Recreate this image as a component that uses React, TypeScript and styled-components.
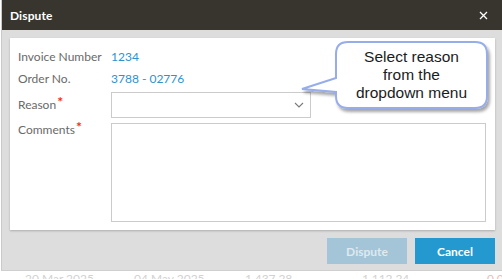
import React from "react";
import styled, { createGlobalStyle } from "styled-components";

const GlobalStyle = createGlobalStyle`
  html, body {
    margin: 0;
    padding: 0;
    background: #ffffff;
    overflow: hidden;
  }
  body {
    font-family: Lato, "Open Sans", sans-serif;
  }
`;

const Page = styled.div`
  width: 502px;
  height: 279px;
  overflow: hidden;
  position: relative;
  background: #ffffff;
`;

const Dialog = styled.div`
  width: 501px;
  height: 271px;
  box-sizing: border-box;
  margin-left: 1px;
  border-left: 1px solid #c9c9c9;
  border-bottom: 1px solid #cfcfcf;
  background: #dddddd;
  display: flex;
  flex-direction: column;
`;

const Header = styled.div`
  height: 30px;
  flex: none;
  background: #38352f;
  display: flex;
  align-items: center;
  justify-content: space-between;
  padding: 0 14px 0 8px;
`;

const Title = styled.div`
  color: #ffffff;
  font-size: 12px;
  font-weight: 700;
  letter-spacing: 0.1px;
`;

const CloseButton = styled.button`
  border: none;
  background: none;
  padding: 0;
  width: 9px;
  height: 9px;
  display: flex;
  cursor: pointer;
`;

const Body = styled.div`
  flex: 1;
  display: flex;
  flex-direction: column;
  padding: 8px 7px 0 8px;
`;

const Panel = styled.div`
  position: relative;
  height: 192px;
  box-sizing: border-box;
  background: #ffffff;
  box-shadow: 0 1px 2px rgba(0, 0, 0, 0.22);
  padding: 10px 8px 0 8px;
  display: flex;
  flex-direction: column;
  gap: 4px;
`;

const Row = styled.div<{ $top?: boolean }>`
  display: flex;
  align-items: ${(p) => (p.$top ? "flex-start" : "center")};
  min-height: 18px;
`;

const Label = styled.div<{ $offset?: number }>`
  width: 93px;
  flex: none;
  color: #6a6a6a;
  font-size: 12px;
  line-height: 16px;
  padding-top: ${(p) => p.$offset ?? 0}px;
`;

const Required = styled.span`
  color: #e8321e;
  font-size: 14px;
  font-weight: 700;
  line-height: 0;
  vertical-align: 2px;
  margin-left: 1px;
`;

const Value = styled.div`
  color: #2f92cf;
  font-size: 12px;
  line-height: 16px;
`;

const SelectBox = styled.div`
  width: 200px;
  height: 26px;
  box-sizing: border-box;
  border: 1px solid #cbcbcb;
  background: #ffffff;
  display: flex;
  align-items: center;
  justify-content: flex-end;
  padding-right: 6px;
`;

const TextArea = styled.textarea`
  width: 375px;
  height: 99px;
  box-sizing: border-box;
  border: 1px solid #cbcbcb;
  resize: none;
  outline: none;
  margin: 1px 0 0 0;
  font-family: Lato, sans-serif;
`;

const Callout = styled.div`
  position: absolute;
  left: 288px;
  top: 0px;
  width: 200px;
  height: 80px;
`;

const CalloutText = styled.div`
  position: absolute;
  left: 38px;
  top: 10px;
  width: 151px;
  text-align: center;
  font-family: "Liberation Sans", Arial, sans-serif;
  font-size: 15.5px;
  line-height: 18px;
  color: #1c1c1c;
`;

const Footer = styled.div`
  display: flex;
  justify-content: flex-end;
  gap: 8px;
  padding-top: 8px;
`;

const Button = styled.button<{ $primary?: boolean }>`
  width: 80px;
  height: 26px;
  border: none;
  font-family: Lato, sans-serif;
  font-size: 12px;
  font-weight: 700;
  cursor: ${(p) => (p.$primary ? "pointer" : "default")};
  background: ${(p) => (p.$primary ? "#2399d0" : "#a3c5d7")};
  color: ${(p) => (p.$primary ? "#ffffff" : "#dfe9ef")};
`;

const BackRow = styled.div`
  height: 16px;
  font-size: 12px;
  line-height: 16px;
  display: grid;
  grid-template-columns: 109px 111px 117px 125px 1fr;
  padding-left: 25px;
`;

const BackCell = styled.div<{ $red?: boolean }>`
  color: ${(p) => (p.$red ? "#f3b9b9" : "#d2d2d2")};
  white-space: nowrap;
`;

function BubbleShape() {
  const r = 12;
  const L = 38;
  const R = 189;
  const T = 4;
  const B = 70;
  const d = `M ${L + r} ${T} H ${R - r} Q ${R} ${T} ${R} ${T + r} V ${B - r} Q ${R} ${B} ${R - r} ${B} H ${L + r} Q ${L} ${B} ${L} ${B - r} V 54 L 4 51 L ${L} 40 V ${T + r} Q ${L} ${T} ${L + r} ${T} Z`;
  return (
    <svg width="200" height="80" viewBox="0 0 200 80" style={{ position: "absolute", left: 0, top: 0 }}>
      <defs>
        <filter id="bubbleShadow" x="-10%" y="-10%" width="130%" height="140%">
          <feDropShadow dx="2" dy="3" stdDeviation="1.6" floodColor="#000" floodOpacity="0.35" />
        </filter>
      </defs>
      <path d={d} fill="#ffffff" stroke="#97adea" strokeWidth="2" filter="url(#bubbleShadow)" />
    </svg>
  );
}

export default function App() {
  return (
    <Page>
      <GlobalStyle />
      <Dialog>
        <Header>
          <Title>Dispute</Title>
          <CloseButton aria-label="Close">
            <svg width="9" height="9" viewBox="0 0 9 9">
              <path d="M1 1 L8 8 M8 1 L1 8" stroke="#ffffff" strokeWidth="1.3" />
            </svg>
          </CloseButton>
        </Header>
        <Body>
          <Panel>
            <Row>
              <Label>Invoice Number</Label>
              <Value>1234</Value>
            </Row>
            <Row>
              <Label>Order No.</Label>
              <Value>3788 - 02776</Value>
            </Row>
            <Row>
              <Label>
                Reason<Required>*</Required>
              </Label>
              <SelectBox>
                <svg width="10" height="6" viewBox="0 0 10 6">
                  <path d="M1 1 L5 5 L9 1" fill="none" stroke="#7a7a7a" strokeWidth="1.1" />
                </svg>
              </SelectBox>
            </Row>
            <Row $top>
              <Label $offset={0}>
                Comments<Required>*</Required>
              </Label>
              <TextArea />
            </Row>
            <Callout>
              <BubbleShape />
              <CalloutText>
                Select reason
                <br />
                from the
                <br />
                dropdown menu
              </CalloutText>
            </Callout>
          </Panel>
          <Footer>
            <Button disabled>Dispute</Button>
            <Button $primary>Cancel</Button>
          </Footer>
        </Body>
      </Dialog>
      <BackRow>
        <BackCell>20 Mar 2025</BackCell>
        <BackCell>04 May 2025</BackCell>
        <BackCell>1,437.28</BackCell>
        <BackCell>1,112.24</BackCell>
        <BackCell $red>0.0</BackCell>
      </BackRow>
    </Page>
  );
}
